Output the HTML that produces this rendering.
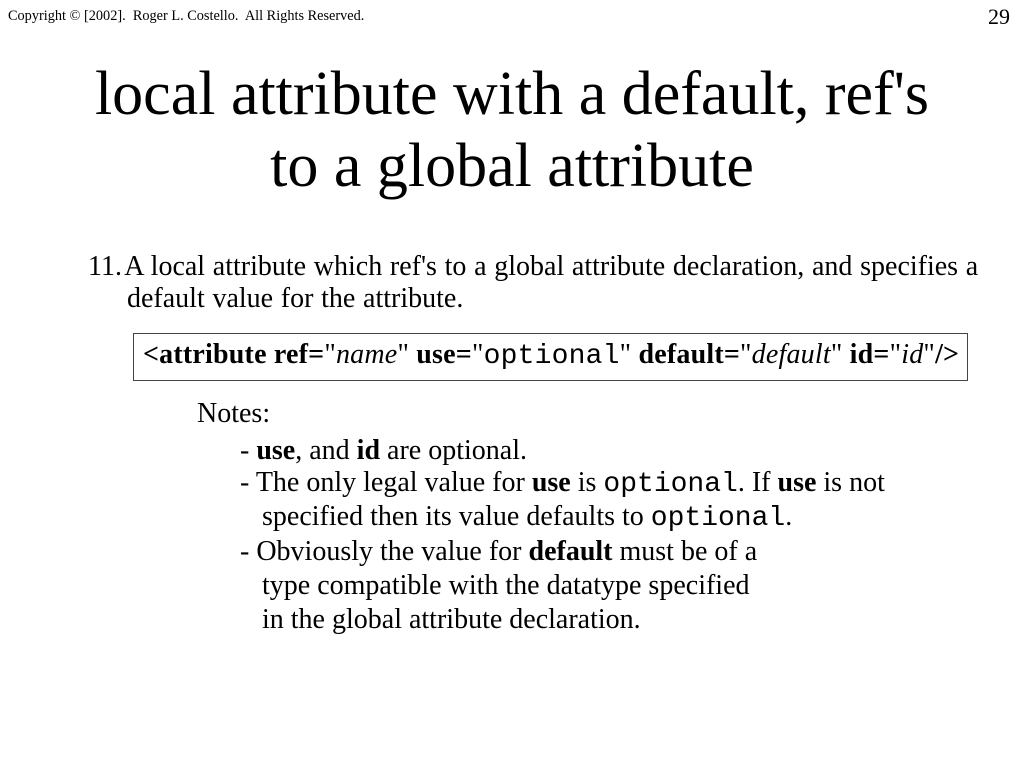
<!DOCTYPE html>
<html><head><meta charset="utf-8"><style>
body{margin:0;width:1024px;height:768px;background:#fff;position:relative;overflow:hidden;font-family:"Liberation Serif",serif;color:#000}
.a{position:absolute;white-space:nowrap}
.m{font-family:"Liberation Mono",monospace}
.n{font-size:28px;line-height:34px}
</style></head><body>
<div class="a" style="left:8px;top:8px;font-size:14.3px">Copyright © [2002].&nbsp; Roger L. Costello.&nbsp; All Rights Reserved.</div>
<div class="a" style="left:988px;top:4px;font-size:22px">29</div>
<div class="a" style="left:0;width:1024px;text-align:center;top:58px;font-size:62px;line-height:72px">local attribute with a default, ref's<br>to a global attribute</div>
<div class="a" style="left:88px;top:251px;font-size:28px;line-height:32px;word-spacing:0.7px">11.&#8202;A local attribute which ref's to a global attribute declaration, and specifies a</div>
<div class="a" style="left:127px;top:283px;font-size:28px;line-height:32px;word-spacing:0.7px">default value for the attribute.</div>
<div class="a" style="left:133px;top:333px;width:833px;height:46px;border:1px solid #444"></div>
<div class="a" style="left:143px;top:339px;font-size:28px;letter-spacing:0.2px"><b>&lt;attribute ref=</b>"<i>name</i>" <b>use=</b>"<span class="m">optional</span>" <b>default=</b>"<i>default</i>" <b>id=</b>"<i>id</i>"<b>/&gt;</b></div>
<div class="a n" style="left:197px;top:397px">Notes:</div>
<div class="a n" style="left:240px;top:434px">- <b>use</b>, and <b>id</b> are optional.</div>
<div class="a n" style="left:240px;top:466px">- The only legal value for <b>use</b> is <span class="m">optional</span>. If <b>use</b> is not</div>
<div class="a n" style="left:262px;top:500px">specified then its value defaults to <span class="m">optional</span>.</div>
<div class="a n" style="left:240px;top:535px">- Obviously the value for <b>default</b> must be of a</div>
<div class="a n" style="left:262px;top:569px">type compatible with the datatype specified</div>
<div class="a n" style="left:262px;top:603px">in the global attribute declaration.</div>
</body></html>
